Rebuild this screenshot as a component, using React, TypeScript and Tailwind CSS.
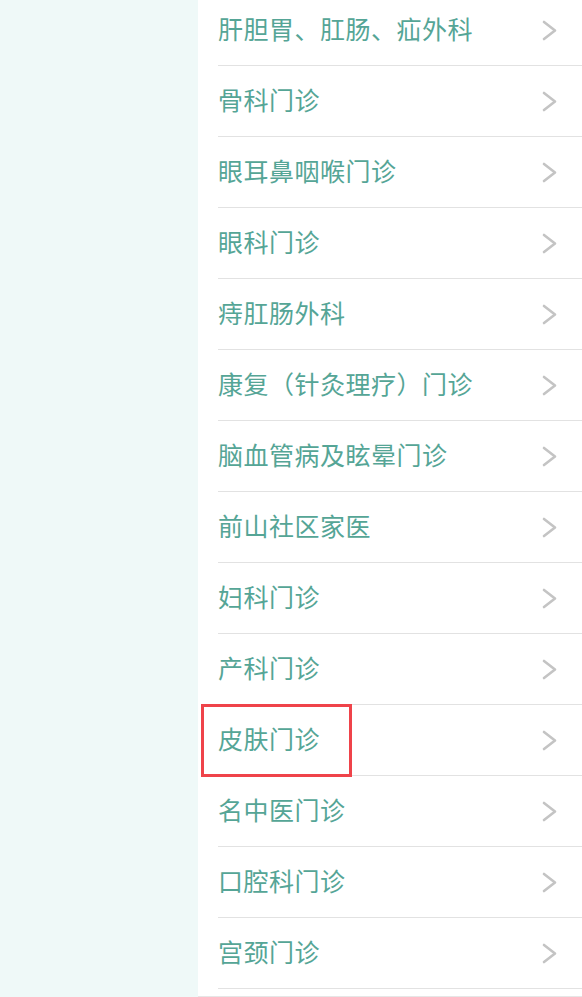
const items = [
  "肝胆胃、肛肠、疝外科",
  "骨科门诊",
  "眼耳鼻咽喉门诊",
  "眼科门诊",
  "痔肛肠外科",
  "康复（针灸理疗）门诊",
  "脑血管病及眩晕门诊",
  "前山社区家医",
  "妇科门诊",
  "产科门诊",
  "皮肤门诊",
  "名中医门诊",
  "口腔科门诊",
  "宫颈门诊",
];

const Chevron = () => (
  <svg width="17" height="21" viewBox="0 0 17 21" fill="none">
    <path d="M3 2 L14 10.5 L3 19" stroke="#c4c4c4" strokeWidth="2.6" strokeLinecap="round" strokeLinejoin="round" />
  </svg>
);

export default function App() {
  return (
    <div
      className="flex h-[997px] w-[582px] overflow-hidden bg-white"
      style={{ fontFamily: '"Noto Sans CJK SC", "Noto Sans", sans-serif' }}
    >
      <div className="w-[198px] shrink-0 bg-[#eff9f8]" />
      <div className="flex-1 pl-[20px] border-b border-[#e6e6e6]">
        <ul className="-mt-[5px]">
          {items.map((name) => (
            <li
              key={name}
              className="relative flex h-[71px] items-center justify-between border-b border-[#e2e2e2] pr-[24px]"
            >
              <span className="mb-[4px] text-[25px] leading-none tracking-[0.5px] text-[#55a596]">{name}</span>
              <Chevron />
              {name === "皮肤门诊" && (
                <div className="absolute left-[-17px] top-[-1px] h-[73px] w-[151px] border-[3px] border-[#ef434a]" />
              )}
            </li>
          ))}
        </ul>
      </div>
    </div>
  );
}
